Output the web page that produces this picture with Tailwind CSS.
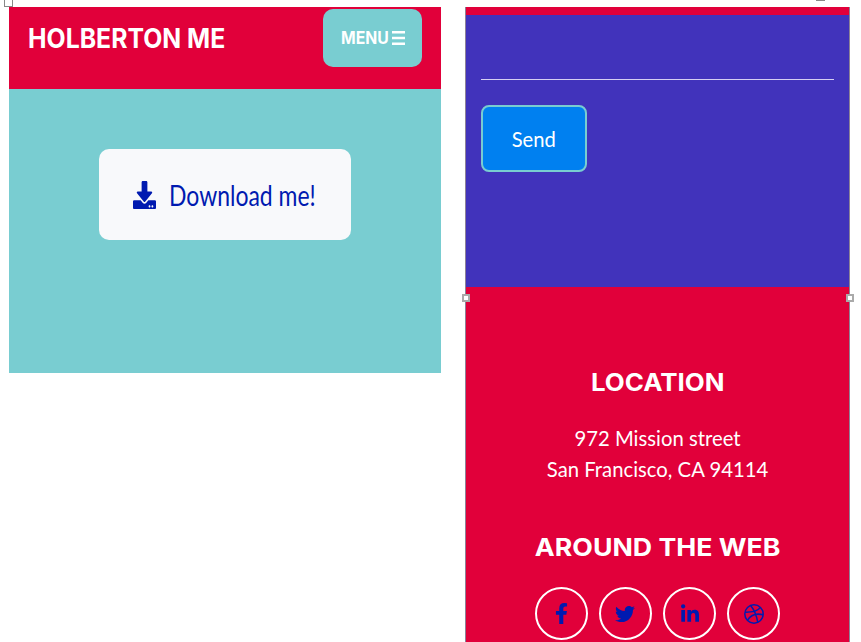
<!DOCTYPE html>
<html lang="en">
<head>
<meta charset="utf-8">
<title>Holberton Me</title>
<script src="https://cdn.jsdelivr.net/npm/@tailwindcss/browser@4"></script>
</head>
<body class="relative h-[642px] w-[861px] overflow-hidden bg-white font-['Lato',sans-serif] text-white">
<div class="flex items-start pt-[7px] pl-[9px]">
  <main class="w-[432px] bg-[#79cdd1] h-[366px]">
    <header class="flex h-[82px] items-start justify-between bg-[#e1003a] pr-[19px] pl-[19px]">
      <h1 class="mt-[15px] w-[210px] origin-left scale-x-[0.936] whitespace-nowrap font-['Inter',sans-serif] text-[26.5px] leading-[32px] font-bold">HOLBERTON ME</h1>
      <button class="mt-[2px] flex h-[58px] w-[99px] items-center rounded-[10px] bg-[#79cdd1] pl-[18px]">
        <span class="w-[51px] origin-left scale-x-[0.9] whitespace-nowrap text-left font-['Inter',sans-serif] text-[17.5px] leading-[20px] font-bold">MENU</span>
        <svg class="h-[14px] w-[13px]" viewBox="0 0 13 14" fill="#fff"><path d="M0 0h13v2.6H0zM0 5.7h13v2.6H0zM0 11.4h13V14H0z"/></svg>
      </button>
    </header>
    <section class="flex pt-[60px] pl-[90px]">
      <button class="flex h-[91px] w-[252px] items-center rounded-[10px] bg-[#f8f9fb] pl-[34px] text-[#001ab0]">
        <svg class="h-[28px] w-[23px] shrink-0" viewBox="0 0 512 512" preserveAspectRatio="none" fill="currentColor"><path d="M216 0h80c13.300 0 24 10.700 24 24v168h87.700c17.800 0 26.700 21.500 14.100 34.100L269.700 378.300c-7.500 7.500-19.800 7.500-27.300 0L90.100 226.100C77.500 213.500 86.400 192 104.200 192H192V24c0-13.300 10.700-24 24-24zm296 376v112c0 13.300-10.700 24-24 24H24c-13.300 0-24-10.700-24-24V376c0-13.300 10.700-24 24-24h146.700l49 49c20.100 20.100 52.500 20.100 72.600 0l49-49H488c13.300 0 24 10.700 24 24zm-124 88c0-11-9-20-20-20s-20 9-20 20 9 20 20 20 20-9 20-20zm64 0c0-11-9-20-20-20s-20 9-20 20 9 20 20 20 20-9 20-20z"/></svg>
        <span class="mt-px ml-[13px] origin-left scale-x-[0.82] whitespace-nowrap text-[28px] leading-[34px]">Download me!</span>
      </button>
    </section>
  </main>
  <aside class="ml-[24px] h-[635px] w-[385px] border-x border-[#8c8296] bg-[#e1003a]">
    <section class="mt-[8px] h-[271.500px] bg-[#4133bb] pt-[64px] pl-[15px]">
      <div class="h-px w-[353px] bg-[#d5d0f2]"></div>
      <button class="mt-[25px] flex h-[67px] w-[106px] items-center justify-center rounded-[8px] border-2 border-[#79cdd1] bg-[#0080f0] text-[20.8px] leading-[26px]"><span class="scale-x-[0.97]">Send</span></button>
    </section>
    <footer class="flex flex-col items-center pt-[80.500px] text-center">
      <h2 class="scale-x-[1.065] whitespace-nowrap font-['Inter',sans-serif] text-[24.3px] leading-[30px] font-bold">LOCATION</h2>
      <p class="mt-[25px] scale-x-[0.975] whitespace-nowrap text-[20.8px] leading-[31px]">972 Mission street<br>San Francisco, CA 94114</p>
      <h2 class="mt-[48px] scale-x-[1.1] whitespace-nowrap font-['Inter',sans-serif] text-[24.3px] leading-[30px] font-bold">AROUND THE WEB</h2>
      <nav class="mt-[25px] flex gap-[11.300px] text-[#001ab0]">
        <a class="flex size-[53px] items-center justify-center rounded-full border-2 border-white"><svg class="h-[21px] w-[13px]" viewBox="0 0 320 512" fill="currentColor"><path d="M279.140 288l14.220-92.660h-88.910v-60.130c0-25.350 12.420-50.060 52.240-50.060h40.420V6.260S260.430 0 225.360 0c-73.220 0-121.080 44.380-121.080 124.720v70.620H22.890V288h81.390v224h100.170V288z"/></svg></a>
        <a class="flex size-[53px] items-center justify-center rounded-full border-2 border-white"><svg class="size-[20px]" viewBox="0 0 512 512" fill="currentColor"><path d="M459.370 151.716c.325 4.548.325 9.097.325 13.645 0 138.720-105.583 298.558-298.558 298.558-59.452 0-114.680-17.219-161.137-47.106 8.447.974 16.568 1.299 25.340 1.299 49.055 0 94.213-16.568 130.274-44.832-46.132-.975-84.792-31.188-98.112-72.772 6.498.974 12.995 1.624 19.818 1.624 9.421 0 18.843-1.300 27.614-3.573-48.081-9.747-84.143-51.980-84.143-102.985v-1.299c13.969 7.797 30.214 12.670 47.431 13.319-28.264-18.843-46.781-51.005-46.781-87.391 0-19.492 5.197-37.360 14.294-52.954 51.655 63.675 129.300 105.258 216.365 109.807-1.624-7.797-2.599-15.918-2.599-24.040 0-57.828 46.782-104.934 104.934-104.934 30.213 0 57.502 12.670 76.670 33.137 23.715-4.548 46.456-13.320 66.599-25.340-7.798 24.366-24.366 44.833-46.132 57.827 21.117-2.273 41.584-8.122 60.426-16.243-14.292 20.791-32.161 39.308-52.628 54.253z"/></svg></a>
        <a class="flex size-[53px] items-center justify-center rounded-full border-2 border-white"><svg class="-mt-[2px] h-[20px] w-[18px]" viewBox="0 0 448 512" preserveAspectRatio="none" fill="currentColor"><path d="M100.280 480H7.400V180.900h92.880zM53.790 140.100C24.090 140.100 0 115.500 0 85.800a53.790 53.790 0 0 1 107.580 0c0 29.700-24.100 54.300-53.790 54.300zM447.900 480h-92.680V334.400c0-34.700-.7-79.200-48.290-79.200-48.290 0-55.690 37.700-55.690 76.700V480h-92.780V180.900h89.080v40.800h1.300c12.400-23.500 42.690-48.300 87.880-48.300 94 0 111.280 61.900 111.280 142.300V480z"/></svg></a>
        <a class="flex size-[53px] items-center justify-center rounded-full border-2 border-white"><svg class="size-[20px]" viewBox="0 0 20 20" fill="none" stroke="currentColor" stroke-width="1.500"><circle cx="10" cy="10" r="9.200"/><path d="M6.600 1.500C9.800 5.300 12.500 11 13.700 18.200M1 8.300C7.500 8.400 13.500 7.300 16.500 3.400M3.600 16.300C6.300 11.400 11.500 9 19.100 10.700"/></svg></a>
      </nav>
    </footer>
  </aside>
</div>
<i class="absolute top-[-1px] left-[4px] h-[8px] w-[9px] border border-[#888] bg-white"></i>
<i class="absolute top-0 left-[816px] h-px w-[9px] bg-[#888]"></i>
<i class="absolute top-[294px] left-[462px] size-[8px] border-2 border-[#aaa] bg-white"></i>
<i class="absolute top-[294px] left-[846px] size-[8px] border-2 border-[#aaa] bg-white"></i>
</body>
</html>
